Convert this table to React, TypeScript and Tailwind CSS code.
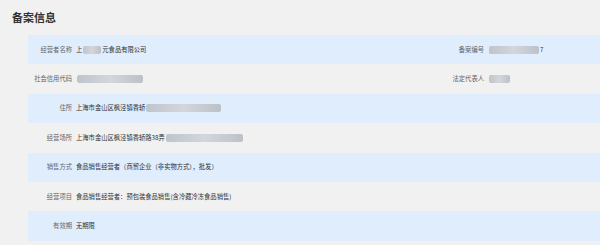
import React from "react";

const font = { fontFamily: '"Noto Sans CJK SC", "Noto Sans", sans-serif' };

function Mask({ w }: { w: number }) {
  return (
    <span
      className="mx-[1px] inline-block h-[8px] rounded-[2px] bg-gradient-to-r from-[#bfc4cb] via-[#d3d7dc] to-[#bcc1c8] align-middle blur-[0.7px]"
      style={{ width: w }}
    />
  );
}

function Cell({ label, children, labelW = 44 }: { label: string; children: React.ReactNode; labelW?: number }) {
  return (
    <div className="flex items-center">
      <span className="shrink-0 text-right text-[#666]" style={{ width: labelW }}>
        {label}
      </span>
      <span className="ml-[4px] flex items-center whitespace-nowrap text-[#333]">{children}</span>
    </div>
  );
}

export default function App() {
  const rows: { label: string; value: React.ReactNode; right?: { label: string; value: React.ReactNode } }[] = [
    {
      label: "经营者名称",
      value: (
        <>
          上<Mask w={18} />元食品有限公司
        </>
      ),
      right: {
        label: "备案编号",
        value: (
          <>
            <Mask w={50} />7
          </>
        ),
      },
    },
    {
      label: "社会信用代码",
      value: <Mask w={66} />,
      right: { label: "法定代表人", value: <Mask w={21} /> },
    },
    {
      label: "住所",
      value: (
        <>
          上海市金山区枫泾镇香轿<Mask w={75} />
        </>
      ),
    },
    {
      label: "经营场所",
      value: (
        <>
          上海市金山区枫泾镇香轿路38弄<Mask w={77} />
        </>
      ),
    },
    { label: "销售方式", value: "食品销售经营者（商贸企业（非实物方式），批发）" },
    { label: "经营项目", value: "食品销售经营者：预包装食品销售(含冷藏冷冻食品销售)" },
    { label: "有效期", value: "无期限" },
  ];

  return (
    <div className="h-[245px] w-[600px] overflow-hidden bg-[#f1f1f1]" style={font}>
      <div className="flex h-[35px] items-center pl-[12px] text-[11px] font-bold text-[#333]">备案信息</div>
      <div className="flex flex-col text-[6.3px] leading-none">
        {rows.map((r, i) => (
          <div
            key={r.label}
            className={`ml-[28px] flex h-[29.4px] items-center ${i % 2 === 0 ? "bg-[#dfedfd]" : "bg-[#f1f1f1]"}`}
          >
            <div className="flex-1">
              <Cell label={r.label}>{r.value}</Cell>
            </div>
            {r.right && (
              <div className="w-[160px]">
                <Cell label={r.right.label} labelW={44}>
                  {r.right.value}
                </Cell>
              </div>
            )}
          </div>
        ))}
      </div>
    </div>
  );
}
